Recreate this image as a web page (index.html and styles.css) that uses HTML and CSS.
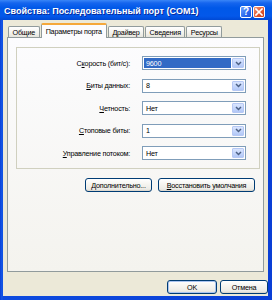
FILE: index.html
```html
<!DOCTYPE html>
<html lang="ru">
<head>
<meta charset="utf-8">
<title>Свойства: Последовательный порт (COM1)</title>
<link rel="stylesheet" href="styles.css">
</head>
<body>
<div class="window">
  <div class="titlebar">
    <span class="title">Свойства: Последовательный порт (COM1)</span>
    <div class="tbtns">
      <span class="tb help">?</span>
      <span class="tb close"><svg width="8" height="8" viewBox="0 0 8 8"><path d="M1 1L7 7M7 1L1 7" stroke="#fff" stroke-width="1.6" stroke-linecap="square"/></svg></span>
    </div>
  </div>
  <div class="client">
    <div class="tabs">
      <span class="tab">Общие</span>
      <span class="tab active">Параметры порта</span>
      <span class="tab">Драйвер</span>
      <span class="tab">Сведения</span>
      <span class="tab">Ресурсы</span>
    </div>
    <div class="panel">
      <div class="group">
        <label class="lbl">С<u>к</u>орость (бит/с):</label>
        <div class="select focused"><span class="value">9600</span><span class="arrow"><svg width="7" height="5" viewBox="0 0 7 5"><path d="M1 1L3.5 3.5L6 1" fill="none" stroke="#4D6185" stroke-width="1.5"/></svg></span></div>
        <label class="lbl"><u>Б</u>иты данных:</label>
        <div class="select"><span class="value">8</span><span class="arrow"><svg width="7" height="5" viewBox="0 0 7 5"><path d="M1 1L3.5 3.5L6 1" fill="none" stroke="#4D6185" stroke-width="1.5"/></svg></span></div>
        <label class="lbl"><u>Ч</u>етность:</label>
        <div class="select"><span class="value">Нет</span><span class="arrow"><svg width="7" height="5" viewBox="0 0 7 5"><path d="M1 1L3.5 3.5L6 1" fill="none" stroke="#4D6185" stroke-width="1.5"/></svg></span></div>
        <label class="lbl"><u>С</u>топовые биты:</label>
        <div class="select"><span class="value">1</span><span class="arrow"><svg width="7" height="5" viewBox="0 0 7 5"><path d="M1 1L3.5 3.5L6 1" fill="none" stroke="#4D6185" stroke-width="1.5"/></svg></span></div>
        <label class="lbl"><u>У</u>правление потоком:</label>
        <div class="select"><span class="value">Нет</span><span class="arrow"><svg width="7" height="5" viewBox="0 0 7 5"><path d="M1 1L3.5 3.5L6 1" fill="none" stroke="#4D6185" stroke-width="1.5"/></svg></span></div>
      </div>
      <div class="actions">
        <span class="btn btn-adv"><u>Д</u>ополнительно...</span>
        <span class="btn btn-reset"><u>В</u>осстановить умолчания</span>
      </div>
    </div>
    <div class="footer">
      <span class="btn btn-ok default">OK</span>
      <span class="btn btn-cancel">Отмена</span>
    </div>
  </div>
</div>
</body>
</html>
```
FILE: styles.css
```css
* { box-sizing: border-box; }
html, body { margin: 0; padding: 0; }
body {
  width: 272px;
  height: 300px;
  overflow: hidden;
  font-family: "Liberation Sans", Arial, sans-serif;
  font-size: 7.2px;
  letter-spacing: -0.2px;
  color: #000;
  background: #fff;
}
.window {
  width: 272px;
  height: 300px;
  display: flex;
  flex-direction: column;
  background: linear-gradient(to right, #0A3FD6 0, #1459E8 2px, #0D4BDF 3px, #0A3FD6 100%);
}
.titlebar {
  height: 20px;
  flex: none;
  display: flex;
  align-items: center;
  padding: 1px 7px 0 4px;
  background: linear-gradient(to bottom, #3A86F7 0, #1565EE 3px, #0058E8 8px, #0358EA 16px, #0049D4 20px);
  color: #fff;
}
.title {
  flex: 1;
  font-weight: bold;
  font-size: 9px;
  letter-spacing: 0;
  white-space: nowrap;
  text-shadow: 1px 1px 0 #0A2A9A;
}
.tbtns { display: flex; gap: 1px; margin-top: 2px; }
.tb {
  width: 12px;
  height: 12px;
  border: 1px solid #fff;
  border-radius: 2px;
  display: flex;
  align-items: center;
  justify-content: center;
  color: #fff;
  font-weight: bold;
  font-size: 10px;
  letter-spacing: 0;
  line-height: 1;
}
.help { background: linear-gradient(135deg, #6FA4FF, #2A68EE 60%, #1A52DA); }
.close { background: linear-gradient(135deg, #F2977A, #E15A32 55%, #C83E1A); }
.client {
  flex: 1;
  margin: 0 4px 4px 3px;
  background: #ECE9D8;
  display: flex;
  flex-direction: column;
  padding-top: 3px;
}
.tabs {
  height: 14px;
  flex: none;
  display: flex;
  align-items: flex-end;
  padding-left: 5px;
}
.tab {
  height: 11px;
  padding: 0 3.5px;
  border: 1px solid #919B9C;
  border-bottom: none;
  border-radius: 2px 2px 0 0;
  background: linear-gradient(to bottom, #FFFFFF, #F3F2ED 60%, #E5E4DC);
  display: flex;
  align-items: center;
  white-space: nowrap;
  margin-left: 1px;
}
.tab:first-child { margin-left: 0; }
.tab.active {
  height: 15px;
  margin-bottom: -1px;
  padding: 0 4px 1px;
  background: #FCFCFE;
  border-top: 2px solid #F5A83A;
  position: relative;
  z-index: 1;
}
.panel {
  flex: 1;
  margin: 0 4px;
  border: 1px solid #919B9C;
  background: linear-gradient(to bottom, #FCFCFE, #F4F3EE);
  padding: 9px 3px 0 8px;
}
.group {
  height: 122px;
  border: 1px solid #D0D0BF;
  padding-top: 8px;
  display: grid;
  grid-template-columns: 113px 104px;
  grid-auto-rows: 14px;
  column-gap: 12px;
  row-gap: 8.5px;
  align-items: center;
  align-content: start;
}
.lbl { text-align: right; white-space: nowrap; }
.select {
  height: 14px;
  border: 1px solid #7F9DB9;
  background: #fff;
  display: flex;
  padding: 1px;
}
.value {
  flex: 1;
  display: flex;
  align-items: center;
  padding-left: 2px;
  margin-right: 1px;
}
.focused .value { background: #316AC5; color: #fff; }
.arrow {
  width: 12px;
  height: 100%;
  border: 1px solid #B6C8F4;
  border-radius: 1px;
  background: linear-gradient(to bottom, #D9E5FE, #C2D4FB 60%, #B1C7F6);
  display: flex;
  align-items: center;
  justify-content: center;
}
.actions {
  display: flex;
  justify-content: flex-end;
  gap: 6px;
  margin-top: 9px;
  padding-right: 5px;
}
.btn {
  height: 14px;
  border: 1px solid #003C74;
  border-radius: 3px;
  background: linear-gradient(to bottom, #FFFFFF, #F4F3EE 50%, #ECEBE6 85%, #D6D0C5);
  display: flex;
  align-items: center;
  justify-content: center;
  white-space: nowrap;
}
.btn-adv { width: 67px; }
.btn-reset { width: 97px; }
.btn-ok { width: 50px; }
.btn-cancel { width: 48px; }
.default { box-shadow: inset 0 0 0 1px #A9C4F0; }
.footer {
  height: 24px;
  flex: none;
  display: flex;
  justify-content: flex-end;
  gap: 3px;
  padding: 8px 0 0;
}
```
